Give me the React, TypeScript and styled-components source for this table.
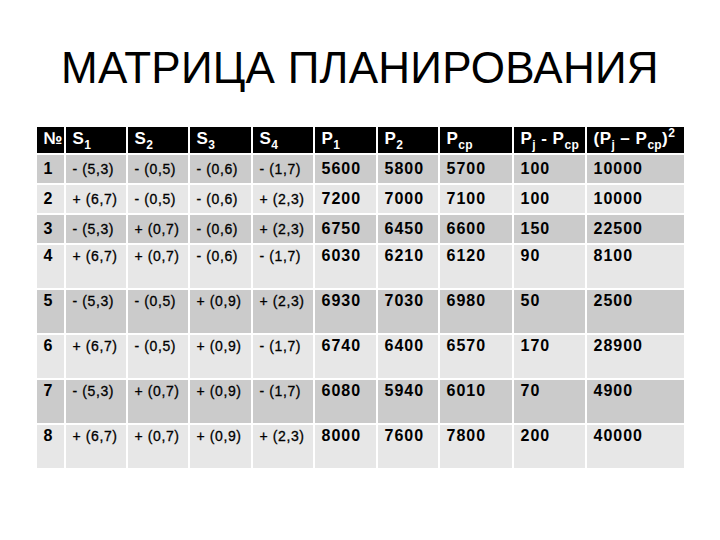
import styled, { createGlobalStyle } from "styled-components"

const GlobalStyle = createGlobalStyle`
  html, body {
    margin: 0;
    padding: 0;
    background: #fff;
  }
  body {
    font-family: "Liberation Sans", Arial, sans-serif;
  }
`

const rows: string[][] = [
  ["1", "- (5,3)", "- (0,5)", "- (0,6)", "- (1,7)", "5600", "5800", "5700", "100", "10000"],
  ["2", "+ (6,7)", "- (0,5)", "- (0,6)", "+ (2,3)", "7200", "7000", "7100", "100", "10000"],
  ["3", "- (5,3)", "+ (0,7)", "- (0,6)", "+ (2,3)", "6750", "6450", "6600", "150", "22500"],
  ["4", "+ (6,7)", "+ (0,7)", "- (0,6)", "- (1,7)", "6030", "6210", "6120", "90", "8100"],
  ["5", "- (5,3)", "- (0,5)", "+ (0,9)", "+ (2,3)", "6930", "7030", "6980", "50", "2500"],
  ["6", "+ (6,7)", "- (0,5)", "+ (0,9)", "- (1,7)", "6740", "6400", "6570", "170", "28900"],
  ["7", "- (5,3)", "+ (0,7)", "+ (0,9)", "- (1,7)", "6080", "5940", "6010", "70", "4900"],
  ["8", "+ (6,7)", "+ (0,7)", "+ (0,9)", "+ (2,3)", "8000", "7600", "7800", "200", "40000"],
]

function App() {
  return (
    <>
      <GlobalStyle />
      <Slide>
        <Title>МАТРИЦА ПЛАНИРОВАНИЯ</Title>
        <Matrix>
          <HeadCell>№</HeadCell>
          <HeadCell>S<Sub>1</Sub></HeadCell>
          <HeadCell>S<Sub>2</Sub></HeadCell>
          <HeadCell>S<Sub>3</Sub></HeadCell>
          <HeadCell>S<Sub>4</Sub></HeadCell>
          <HeadCell>P<Sub>1</Sub></HeadCell>
          <HeadCell>P<Sub>2</Sub></HeadCell>
          <HeadCell>P<Sub>ср</Sub></HeadCell>
          <HeadCell>P<Sub>j</Sub> - P<Sub>ср</Sub></HeadCell>
          <HeadCell>(P<Sub>j</Sub> – P<Sub>ср</Sub>)<Sup>2</Sup></HeadCell>
          {rows.map((row, r) =>
            row.map((val, c) => (
              <Cell
                key={`${r}-${c}`}
                $dark={r % 2 === 0}
                $tall={r >= 3}
                $sign={c >= 1 && c <= 4}
              >
                {val}
              </Cell>
            ))
          )}
        </Matrix>
      </Slide>
    </>
  )
}

const Slide = styled.div`
  width: 720px;
  height: 540px;
  display: flex;
  flex-direction: column;
  align-items: center;
  background: #fff;
`

const Title = styled.h1`
  margin: 0;
  padding-top: 43px;
  font-size: 44px;
  line-height: 50px;
  font-weight: 400;
  color: #000;
  letter-spacing: 0.25px;
`

const Matrix = styled.div`
  margin-top: 34px;
  display: grid;
  grid-template-columns: 27px 60px 60px 61px 60px 61px 60px 72px 71px 97px;
  grid-template-rows: 26px repeat(3, 28px) repeat(5, 43px);
  gap: 2px;
  background: #fff;
`

const HeadCell = styled.div`
  background: #000;
  color: #fff;
  font-weight: 700;
  font-size: 17px;
  letter-spacing: 0.5px;
  line-height: 24px;
  padding: 0 0 0 7px;
  white-space: nowrap;
`

const Sub = styled.sub`
  font-size: 12px;
  vertical-align: -5px;
  line-height: 0;
  letter-spacing: 0.3px;
`

const Sup = styled.sup`
  font-size: 12px;
  vertical-align: 7px;
  line-height: 0;
`

const Cell = styled.div<{ $dark: boolean; $tall: boolean; $sign: boolean }>`
  background: ${(p) => (p.$dark ? "#cbcbcb" : "#e7e7e7")};
  color: #000;
  font-size: ${(p) => (p.$sign ? "14px" : "16px")};
  font-weight: ${(p) => (p.$sign ? 400 : 700)};
  letter-spacing: ${(p) => (p.$sign ? "0.6px" : "1px")};
  -webkit-text-stroke: ${(p) => (p.$sign ? "0.3px #000" : "0")};
  line-height: 20px;
  display: flex;
  align-items: ${(p) => (p.$tall ? "flex-start" : "center")};
  padding: ${(p) => (p.$tall ? "1px 0 0 7px" : "0 0 0 7px")};
  white-space: nowrap;
`

export default App
